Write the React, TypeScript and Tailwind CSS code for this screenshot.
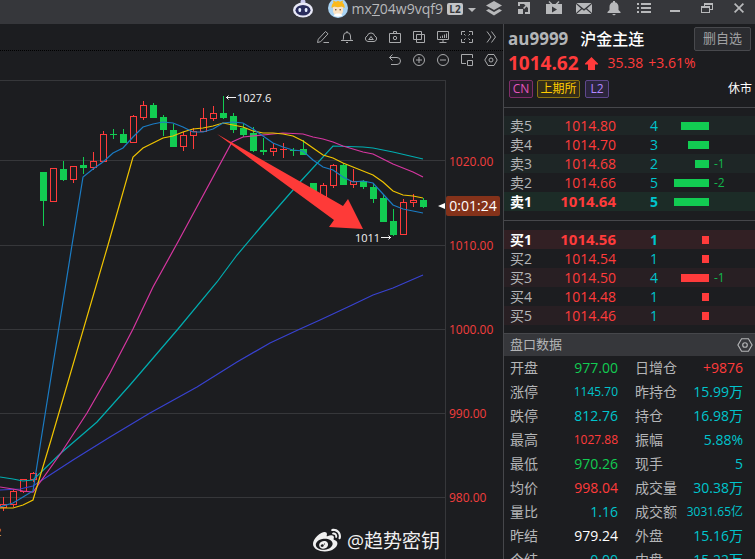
import { ReactNode } from "react";
import clsx from "clsx";
import { FaWeibo } from "react-icons/fa";

type Candle = [x: number, top: number, bottom: number, high: number, low: number, up?: 1];

// x, body top, body bottom, wick top, wick bottom, rising
const candles: Candle[] = [
  [3, 504, 508, 497, 511, 1],
  [13, 491, 505, 489, 507, 1],
  [23, 479, 492, 479, 493, 1],
  [33, 473, 480, 472, 482, 1],
  [43, 172, 201, 172, 226],
  [53, 168, 202, 168, 202, 1],
  [63, 169, 180, 161, 181],
  [73, 166, 180, 166, 183, 1],
  [83, 165, 168, 157, 174],
  [93, 161, 168, 152, 170, 1],
  [103, 134, 162, 131, 162, 1],
  [113, 134, 135, 129, 139],
  [123, 134, 143, 129, 143],
  [133, 116, 143, 115, 143, 1],
  [143, 105, 118, 101, 120, 1],
  [153, 105, 118, 103, 118],
  [163, 117, 130, 115, 136],
  [173, 130, 147, 124, 147],
  [183, 135, 147, 132, 151, 1],
  [193, 131, 136, 128, 149, 1],
  [203, 118, 132, 108, 132, 1],
  [213, 113, 119, 106, 121, 1],
  [223, 113, 118, 96, 119],
  [233, 116, 130, 113, 133],
  [243, 128, 135, 124, 137],
  [253, 133, 151, 127, 152],
  [263, 150, 152, 138, 155],
  [273, 148, 152, 143, 156, 1],
  [283, 149, 150, 143, 158, 1],
  [293, 150, 151, 148, 156],
  [303, 149, 155, 140, 155],
  [313, 183, 195, 183, 195],
  [323, 185, 197, 183, 197, 1],
  [333, 165, 186, 164, 188, 1],
  [343, 165, 185, 163, 185],
  [353, 181, 185, 169, 188, 1],
  [363, 181, 187, 180, 189],
  [373, 187, 199, 184, 203],
  [383, 198, 222, 195, 222],
  [393, 221, 235, 209, 236],
  [403, 202, 235, 199, 235, 1],
  [413, 200, 203, 194, 207, 1],
  [423, 200, 207, 198, 208],
];

const averages = [
  {
    color: "#3842d0",
    points:
      "0,490 20,489 33,486 73,460 110,437 150,413 197,387 237,362 270,343 300,329 320,320 350,306 373,295 393,288 423,275",
  },
  {
    color: "#00adb0",
    points:
      "0,477 13,479 23,481 33,480 61,453 97,422 130,385 178,329 217,282 237,255 265,222 300,182 333,146 363,147 373,148 393,152 423,159",
  },
  {
    color: "#d636a0",
    points:
      "0,487 13,489 23,491 33,492 61,453 87,413 110,373 133,329 153,287 179,240 232,142 243,137 273,134 283,133 303,134 313,137 323,139 333,142 343,146 353,149 363,152 373,154 383,159 393,164 403,168 413,172 423,177",
  },
  {
    color: "#f0c400",
    points:
      "0,508 13,508 23,505 33,500 51,440 108,245 133,157 143,148 153,143 163,138 173,136 183,132 193,129 203,128 213,126 223,123 233,125 243,127 253,131 263,133 273,133 283,134 293,136 303,141 313,148 323,155 333,158 343,163 353,167 363,171 373,175 383,182 393,191 403,195 413,196 423,198",
  },
  {
    color: "#1b7cc4",
    points:
      "0,507 13,503 23,497 33,491 41,440 72,245 83,177 93,169 103,162 113,153 123,148 133,137 143,127 153,124 163,122 173,123 183,127 193,132 203,132 213,129 223,123 233,122 243,123 253,129 263,136 273,143 283,147 293,150 303,151 313,160 323,167 333,170 343,177 353,182 363,181 373,183 383,194 393,205 403,209 413,211 423,213",
  },
];

const gridLines = [80, 160, 245, 329, 413, 497];
const axisLabels = ["1020.00", "1010.00", "1000.00", "990.00", "980.00"];

type Order = { label: string; price: string; qty: number; delta?: string };

const sells: Order[] = [
  { label: "卖5", price: "1014.80", qty: 4 },
  { label: "卖4", price: "1014.70", qty: 3 },
  { label: "卖3", price: "1014.68", qty: 2, delta: "-1" },
  { label: "卖2", price: "1014.66", qty: 5, delta: "-2" },
  { label: "卖1", price: "1014.64", qty: 5 },
];

const buys: Order[] = [
  { label: "买1", price: "1014.56", qty: 1 },
  { label: "买2", price: "1014.54", qty: 1 },
  { label: "买3", price: "1014.50", qty: 4, delta: "-1" },
  { label: "买4", price: "1014.48", qty: 1 },
  { label: "买5", price: "1014.46", qty: 1 },
];

const red = "text-[#ff3b3b]";
const green = "text-[#12cc52]";
const cyan = "text-[#00c4cc]";

const stats = [
  ["开盘", "977.00", green, "日增仓", "+9876", red],
  ["涨停", "1145.70", cyan, "昨持仓", "15.99万", cyan],
  ["跌停", "812.76", cyan, "持仓", "16.98万", cyan],
  ["最高", "1027.88", red, "振幅", "5.88%", cyan],
  ["最低", "970.26", green, "现手", "5", cyan],
  ["均价", "998.04", red, "成交量", "30.38万", cyan],
  ["量比", "1.16", cyan, "成交额", "3031.65亿", cyan],
  ["昨结", "979.24", "text-white", "外盘", "15.16万", cyan],
  ["今结", "0.00", cyan, "内盘", "15.22万", cyan],
];

function ToolButton({ label, children }: { label: string; children: ReactNode }) {
  return (
    <button type="button" aria-label={label} className="flex h-[18px] w-6 items-center justify-center">
      <svg viewBox="0 0 14 14" className="size-3.5" fill="none" stroke="currentColor">
        {children}
      </svg>
    </button>
  );
}

function BarButton({ label, wide, children }: { label: string; wide?: boolean; children: ReactNode }) {
  return (
    <button
      type="button"
      aria-label={label}
      className={clsx("flex h-4 items-center justify-center", wide ? "w-8" : "w-[30px]")}
    >
      <svg viewBox="0 0 16 16" className="size-4" fill="currentColor">
        {children}
      </svg>
    </button>
  );
}

function TitleBar() {
  return (
    <header className="flex h-6 shrink-0 items-center justify-end bg-[#36373b] pb-1.5 text-[#b8b9bb]">
      <button type="button" aria-label="助手" className="mr-[15px]">
        <svg viewBox="0 0 20 20" className="size-5">
          <circle cx="10" cy="3" r="2.5" fill="#c9c9ef" />
          <ellipse cx="10" cy="11" rx="10" ry="7.5" fill="#e8e8f6" />
          <ellipse cx="10" cy="11.3" rx="7.5" ry="5.2" fill="#292c5c" />
          <rect x="5.5" y="9" width="2.6" height="4" rx="1.2" fill="#e4ecff" />
          <rect x="11.8" y="9" width="2.6" height="4" rx="1.2" fill="#e4ecff" />
        </svg>
      </button>
      <button type="button" className="flex items-center gap-1 pr-0.5">
        <svg viewBox="0 0 20 20" className="size-5">
          <circle cx="10" cy="9" r="10" fill="#a9d3f3" />
          <path d="M5 8h10v4a5 4.500 0 0 1-10 0z" fill="#fbe3c4" />
          <path d="M3.500 9c0-3 1-4.500 2-5L5 1.500l3 1.300 2-1 2 1 3-1.300-.5 2.500c1.200.6 2.200 2 2.200 5l-3-1.500-3.700.8-3.700-.8z" fill="#fbb91b" />
          <path d="M5.500 16.500c1-1.500 2.500-2 4.500-2s3.500.5 4.500 2a9 9 0 0 1-9 0z" fill="#fff" />
          <circle cx="7.800" cy="10.800" r=".8" fill="#6b4a2a" />
          <circle cx="12.200" cy="10.800" r=".8" fill="#6b4a2a" />
        </svg>
        <span className="text-sm leading-4">
          mx<u>7</u>04w9vqf9
        </span>
        <span className="flex h-3 w-4 items-center justify-center rounded-xs bg-[#c4c5c7] text-[10px] leading-3 font-bold text-[#36373b]">
          L2
        </span>
        <svg viewBox="0 0 8 4" className="mx-px mt-0.5 h-1 w-2" fill="currentColor">
          <path d="M0 0h8L4 4z" />
        </svg>
      </button>
      <BarButton label="图层">
        <path d="M8 0l8 4.500-8 4.500-8-4.500z" />
        <path d="M0 9.500l2.800-1.500L8 11l5.200-3 2.800 1.500L8 14.500z" />
      </BarButton>
      <BarButton label="弹出">
        <path d="M2 1h12v12H9v-2h3V3H4v2H2zM2 8h5v5H2zM7 7l2.500-2.500L8 3h4v4l-1.500-1.400L8.200 8z" />
      </BarButton>
      <BarButton label="直播">
        <path d="M3.500 0l3 3h3l3-3 1 1-2 2H16v10H0V3h4.500l-2-2zM6 5.500v6l5-3z" fillRule="evenodd" />
      </BarButton>
      <BarButton label="消息">
        <path d="M.5 2h15L8 8zM0 3l5 4.500L0 12zM16 3l-5 4.500 5 4.500zM6 8.300l2 1.500 2-1.500L15.500 13H.5z" />
      </BarButton>
      <BarButton label="提醒">
        <path d="M7 0h2v1.200c2.300.5 3.500 2.300 3.500 4.800v3l2 2v1h-13v-1l2-2V6c0-2.500 1.200-4.300 3.500-4.800zM6 13h4l-2 1.500z" />
      </BarButton>
      <BarButton label="菜单">
        <path d="M1 2h2v2H1zM5 2h10v2H5zM1 6h2v2H1zM5 6h10v2H5zM1 10h2v2H1zM5 10h10v2H5z" />
      </BarButton>
      <BarButton label="最小化" wide>
        <path d="M3 9h10v2H3z" />
      </BarButton>
      <BarButton label="还原" wide>
        <path d="M5 2h9v7h-3V8h2V4H6v1H5zM2 5h9v7H2zM3 7v4h7V7z" fillRule="evenodd" />
      </BarButton>
      <BarButton label="关闭" wide>
        <path d="M3 3.200L4.200 2 8 5.800 11.800 2 13 3.200 9.200 7l3.800 3.800-1.200 1.200L8 8.200 4.200 12 3 10.800 6.800 7z" />
      </BarButton>
    </header>
  );
}

const hexagon = "M4 1.500h6L13.200 7 10 12.500H4L.8 7z";

function Toolbars() {
  return (
    <div className="h-[51px] shrink-0 text-[#a9aaac]">
      <div className="flex h-[27px] items-center justify-end border-b border-dotted border-black">
        <ToolButton label="画线">
          <path d="M1.500 12.500l.8-3.300L9.500 1.500l2.500 2.300-7.300 7.900zM7.500 12.500H13" />
        </ToolButton>
        <ToolButton label="预警">
          <path d="M1 10.500h12M2.500 10.500c.8-.8 1-1.500 1-2.500V6a3.500 3.500 0 0 1 7 0v2c0 1 .2 1.700 1 2.500M6 12.500h2M7 1v1.500" />
        </ToolButton>
        <ToolButton label="云端">
          <path d="M4 11.500a2.900 2.900 0 0 1-.7-5.600 3.800 3.800 0 0 1 7.400 0 2.900 2.900 0 0 1-.7 5.600zM5 9.500l2-3 2 3zM4.500 9.500h5" />
        </ToolButton>
        <ToolButton label="截图">
          <path d="M1.500 3.500h11v9h-11zM5.500 3.500v-2h3v2" />
          <circle cx="7" cy="8" r="1.700" />
        </ToolButton>
        <ToolButton label="叠加">
          <path d="M1.500 1.500h8v8h-8zM4.500 4.500h8v8h-8z" />
        </ToolButton>
        <ToolButton label="看板">
          <path d="M1.500 1.500h11v8h-11zM4.500 8V6.500M6.500 8V5.500M8.500 8V4.500M10.500 8V3.500M7 9.500v3M3.500 12.500h7" />
        </ToolButton>
        <ToolButton label="全屏">
          <path d="M1.500 5V1.500H5M9 1.500h3.500V5M12.500 9v3.500H9M5 12.500H1.500V9M4 4l1.500 1.500M10 4L8.500 5.500M4 10l1.500-1.500M10 10L8.500 8.500" />
        </ToolButton>
        <ToolButton label="更多">
          <path d="M3 1.500L7 7l-4 5.500M7.500 1.500l4 5.500-4 5.500" />
        </ToolButton>
      </div>
      <div className="flex justify-end">
        <ToolButton label="撤销">
          <path d="M4.500 1.500l-3 3 3 3M1.500 4.500H9a3.500 3.500 0 0 1 0 7H3" />
        </ToolButton>
        <ToolButton label="放大">
          <circle cx="7" cy="7" r="5.500" />
          <path d="M4 7h6M7 4v6" />
        </ToolButton>
        <ToolButton label="缩小">
          <circle cx="7" cy="7" r="5.500" />
          <path d="M4 7h6" />
        </ToolButton>
        <ToolButton label="小窗">
          <path d="M6 10.500H1.500v-9h11V5M7.500 7.500h5v5h-5z" />
        </ToolButton>
        <ToolButton label="设置">
          <path d={hexagon} />
          <circle cx="7" cy="7" r="2" />
        </ToolButton>
      </div>
    </div>
  );
}

function Chart() {
  return (
    <div className="flex min-w-0 flex-1 justify-end overflow-hidden">
      <svg viewBox="0 75 445 484" className="h-[484px] w-[445px] shrink-0 overflow-visible">
        {gridLines.map((y) => (
          <path key={y} d={`M-3000 ${y + 0.5}H445`} stroke="#36373a" />
        ))}
        {candles.map(([x, top, bottom, high, low, up]) => {
          const color = up ? "#ff3b3b" : "#12cc52";
          return (
            <g key={x} stroke={color}>
              <path d={`M${x + 0.5} ${high}V${top}M${x + 0.5} ${bottom}V${low}`} />
              {up && bottom - top > 1 ? (
                <rect x={x - 2.5} y={top + 0.5} width="6" height={bottom - top - 1} fill="none" />
              ) : (
                <rect x={x - 3} y={top} width="7" height={bottom - top} fill={color} stroke="none" />
              )}
            </g>
          );
        })}
        {averages.map((line) => (
          <polyline key={line.color} points={line.points} fill="none" stroke={line.color} strokeWidth="1.200" />
        ))}
        <path d="M217 134L343 206L348 199L363 229L329 227L334 220Z" fill="#fe3a38" />
        <g fill="#f2f2f2" fontSize="11">
          <text x="237" y="102">1027.6</text>
          <text x="355" y="242">1011</text>
          <text x="-5" y="536" fill="#f5d9a8">2</text>
        </g>
        <path d="M226 97.500h10M228.500 95.500l-2 2 2 2M381 237.500h10M388.500 235.500l2 2-2 2" stroke="#f2f2f2" fill="none" />
        <path d="M438 206l7-3v6z" fill="#fff" />
      </svg>
    </div>
  );
}

function PriceAxis() {
  return (
    <div className="relative w-[58px] shrink-0">
      <ul className="mt-[5px] h-full border-l border-[#36373a] pt-10 pl-[3px] text-xs text-[#f23d3d]">
        {axisLabels.map((label) => (
          <li key={label} className="flex h-[84px] items-center">
            {label}
          </li>
        ))}
      </ul>
      <time className="absolute top-[121px] left-px flex h-5 w-[54px] items-center justify-center rounded-xs bg-[#84321a] text-sm text-white">
        0:01:24
      </time>
    </div>
  );
}

function OrderTable({ orders, side }: { orders: Order[]; side: "sell" | "buy" }) {
  const sell = side === "sell";
  return (
    <table className="w-full table-fixed text-sm leading-[19px]">
      <colgroup>
        <col className="w-[38px]" />
        <col className="w-[74px]" />
        <col className="w-[42px]" />
        <col className="w-[51px]" />
        <col />
      </colgroup>
      <tbody>
        {orders.map((order, i) => {
          const best = order.label.endsWith("1");
          return (
            <tr
              key={order.label}
              className={clsx(
                "h-[19px]",
                best && (sell ? "bg-[#1c2c27]" : "bg-[#322024]"),
                !best && i % 2 === 0 && (sell ? "bg-[#1e2626]" : "bg-[#281f23]")
              )}
            >
              <th
                scope="row"
                className={clsx("pl-1.5 text-left whitespace-nowrap", best ? "font-bold text-white" : "font-normal text-[#b4b5b7]")}
              >
                {order.label}
              </th>
              <td className={clsx("text-right text-[#ff3b3b]", best && "text-[15px] font-bold")}>{order.price}</td>
              <td className={clsx("text-right text-[#00c4cc]", best && "font-bold")}>{order.qty}</td>
              <td>
                <div
                  className={clsx("ml-auto h-2", sell ? "bg-[#12cc52]" : "bg-[#ff3b3b]")}
                  style={{ width: order.qty * 7 }}
                />
              </td>
              <td className="pl-[5px] text-xs leading-[19px] text-[#12b84c]">{order.delta}</td>
            </tr>
          );
        })}
      </tbody>
    </table>
  );
}

function QuotePanel() {
  return (
    <aside className="flex w-[252px] shrink-0 flex-col border-l border-[#46474b]">
      <section className="h-[83px] shrink-0 pt-[3px] pl-1">
        <div className="flex h-6 items-center">
          <h1 className="text-[17px] font-bold text-[#b4b5b7]">au9999</h1>
          <h2 className="ml-3 text-base font-medium text-white">沪金主连</h2>
          <button
            type="button"
            className="mr-1 ml-auto h-6 w-[57px] rounded-xs border border-[#48494d] bg-[#2b2c30] text-[13px] text-[#a0a1a3]"
          >
            删自选
          </button>
        </div>
        <div className="flex h-6 items-center text-[#ff3b3b]">
          <strong className="text-[19px]">1014.62</strong>
          <svg viewBox="0 0 13 13" className="ml-1.5 size-[13px]" fill="currentColor">
            <path d="M6.500 0L13 6.500v1h-3V13H3V7.500H0v-1z" />
          </svg>
          <span className="ml-2.5 text-sm">35.38</span>
          <span className="ml-[5px] text-sm">+3.61%</span>
        </div>
        <div className="flex h-7 items-center gap-1 pl-px text-xs">
          <span className="flex h-[18px] w-6 items-center justify-center rounded-xs border border-[#7f2d68] bg-[#2c1c2e] text-[#e455bd]">
            CN
          </span>
          <span className="flex h-[18px] w-[43px] items-center justify-center rounded-xs border border-[#8c7310] bg-[#332d19] whitespace-nowrap text-[#ffcc00]">
            上期所
          </span>
          <span className="ml-px flex h-[18px] w-6 items-center justify-center rounded-xs border border-[#5e478c] bg-[#2b253c] text-[#b388ff]">
            L2
          </span>
          <span className="mr-[3px] ml-auto text-white">休市</span>
        </div>
      </section>

      <section className="shrink-0 border-t border-[#46474b] pt-2 pb-[9px]">
        <OrderTable orders={sells} side="sell" />
      </section>
      <section className="shrink-0 border-t border-[#46474b] pt-[9px] pb-2">
        <OrderTable orders={buys} side="buy" />
      </section>

      <div className="flex h-[23px] shrink-0 items-center justify-between border-t border-[#46474b] bg-[#36373b] pr-0.5 pl-1.5 text-[#b4b5b7]">
        <h3 className="text-[13px]">盘口数据</h3>
        <button type="button" aria-label="盘口设置">
          <svg viewBox="0 0 14 14" className="size-4" fill="none" stroke="currentColor">
            <path d={hexagon} />
            <circle cx="7" cy="7" r="2" />
          </svg>
        </button>
      </div>
      <div className="min-h-0 flex-1 overflow-hidden">
        <table className="w-full table-fixed text-sm whitespace-nowrap">
          <colgroup>
            <col className="w-[46px]" />
            <col className="w-[68px]" />
            <col className="w-[62px]" />
            <col />
          </colgroup>
          <tbody>
            {stats.map(([name, value, color, name2, value2, color2]) => (
              <tr key={name} className="h-6">
                <th scope="row" className="pl-1.5 text-left font-normal text-[#b4b5b7]">
                  {name}
                </th>
                <td className={clsx("text-right", color, value.length > 6 && "text-xs")}>{value}</td>
                <th scope="row" className="pl-[17px] text-left font-normal text-[#b4b5b7]">
                  {name2}
                </th>
                <td className={clsx("pr-3 text-right", color2, value2.length > 6 && "text-xs")}>{value2}</td>
              </tr>
            ))}
          </tbody>
        </table>
      </div>
    </aside>
  );
}

export default function App() {
  return (
    <div className="flex h-screen flex-col overflow-hidden bg-[#1c1d20] font-['Open_Sans','Noto_Sans_CJK_SC',sans-serif]">
      <TitleBar />
      <div className="flex min-h-0 flex-1">
        <main className="relative flex min-w-0 flex-1 flex-col">
          <Toolbars />
          <div className="flex min-h-0 flex-1 overflow-hidden">
            <Chart />
            <PriceAxis />
          </div>
          <div className="absolute right-[63px] bottom-1 flex items-center gap-1.5 text-[#f0f0f0]">
            <FaWeibo className="size-7" />
            <span className="text-[19px] leading-7">@趋势密钥</span>
          </div>
        </main>
        <QuotePanel />
      </div>
    </div>
  );
}
